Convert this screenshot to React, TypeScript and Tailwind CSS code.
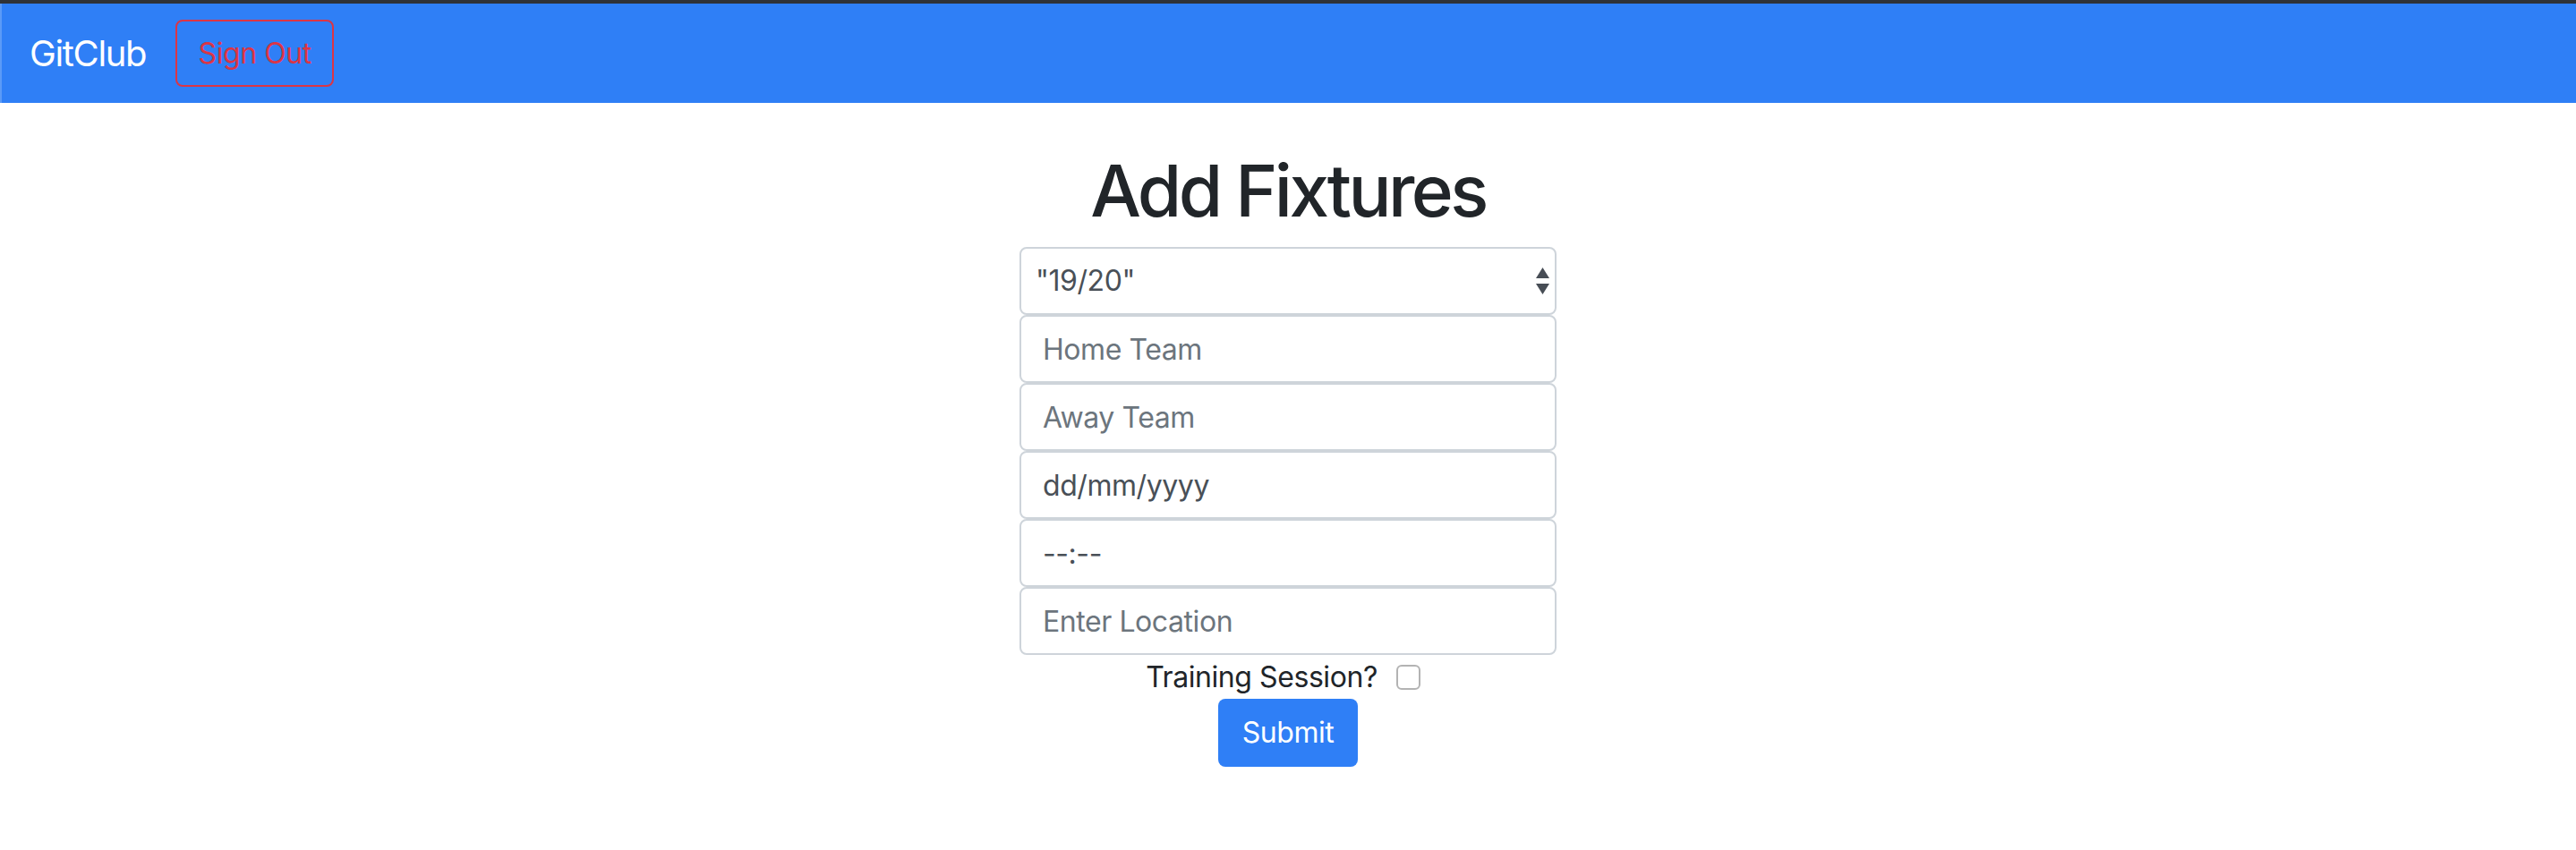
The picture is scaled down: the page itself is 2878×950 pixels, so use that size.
import React from "react";

export default function App() {
  return (
    <div className="min-h-[950px] bg-white font-['Inter','Noto_Sans',sans-serif] tracking-[-0.027em]">
      <div className="h-[4px] bg-[#2f3237]" />
      <nav className="flex h-[111px] items-center border-l-2 border-[#5b9af7] bg-[#2f7ff6] pl-[31px]">
        <span className="text-[40px] leading-[60px] tracking-[-0.034em] text-white">GitClub</span>
        <button className="ml-[33px] flex h-[75px] w-[177px] items-center justify-center rounded-[8px] border-2 border-[#dc3545] text-[32px] leading-[48px] text-[#dc3545]">
          Sign Out
        </button>
      </nav>
      <main className="flex flex-col items-center">
        <h1 className="mt-[50px] mb-[15px] text-[80px] font-medium leading-[96px] tracking-[-0.045em] text-[#212529]">
          Add Fixtures
        </h1>
        <form className="flex w-[600px] flex-col">
          <div className="relative">
            <select className="h-[76px] w-full appearance-none rounded-[8px] border-2 border-[#ced4da] bg-white pl-[16px] text-[32px] text-[#495057] outline-none">
              <option>"19/20"</option>
            </select>
            <svg
              className="pointer-events-none absolute right-[8px] top-[23px]"
              width="15"
              height="30"
              viewBox="0 0 15 30"
            >
              <polygon points="7.5,0 15,12 0,12" fill="#474d55" />
              <polygon points="0,18 15,18 7.5,30" fill="#474d55" />
            </svg>
          </div>
          <input
            type="text"
            placeholder="Home Team"
            className="h-[76px] w-full rounded-[8px] border-2 border-[#ced4da] px-[24px] text-[32px] text-[#495057] outline-none placeholder:text-[#6c757d]"
          />
          <input
            type="text"
            placeholder="Away Team"
            className="h-[76px] w-full rounded-[8px] border-2 border-[#ced4da] px-[24px] text-[32px] text-[#495057] outline-none placeholder:text-[#6c757d]"
          />
          <input
            type="text"
            placeholder="dd/mm/yyyy"
            className="h-[76px] w-full rounded-[8px] border-2 border-[#ced4da] px-[24px] text-[32px] text-[#495057] outline-none placeholder:text-[#495057]"
          />
          <input
            type="text"
            placeholder="--:--"
            className="h-[76px] w-full rounded-[8px] border-2 border-[#ced4da] px-[24px] text-[32px] text-[#495057] outline-none placeholder:text-[#495057]"
          />
          <input
            type="text"
            placeholder="Enter Location"
            className="h-[76px] w-full rounded-[8px] border-2 border-[#ced4da] px-[24px] text-[32px] text-[#495057] outline-none placeholder:text-[#6c757d]"
          />
          <label className="mt-[1px] flex h-[48px] items-center justify-center text-[32px] leading-[48px] text-[#212529]">
            <span>Training Session?</span>
            <span className="ml-[21px] mr-[11px] h-[28px] w-[27px] rounded-[6px] border-2 border-[#b3b3b3] bg-white" />
          </label>
          <div className="flex justify-center">
            <button
              type="button"
              className="h-[76px] w-[156px] rounded-[8px] bg-[#2f7ff6] text-[32px] leading-[48px] text-white"
            >
              Submit
            </button>
          </div>
        </form>
      </main>
    </div>
  );
}
